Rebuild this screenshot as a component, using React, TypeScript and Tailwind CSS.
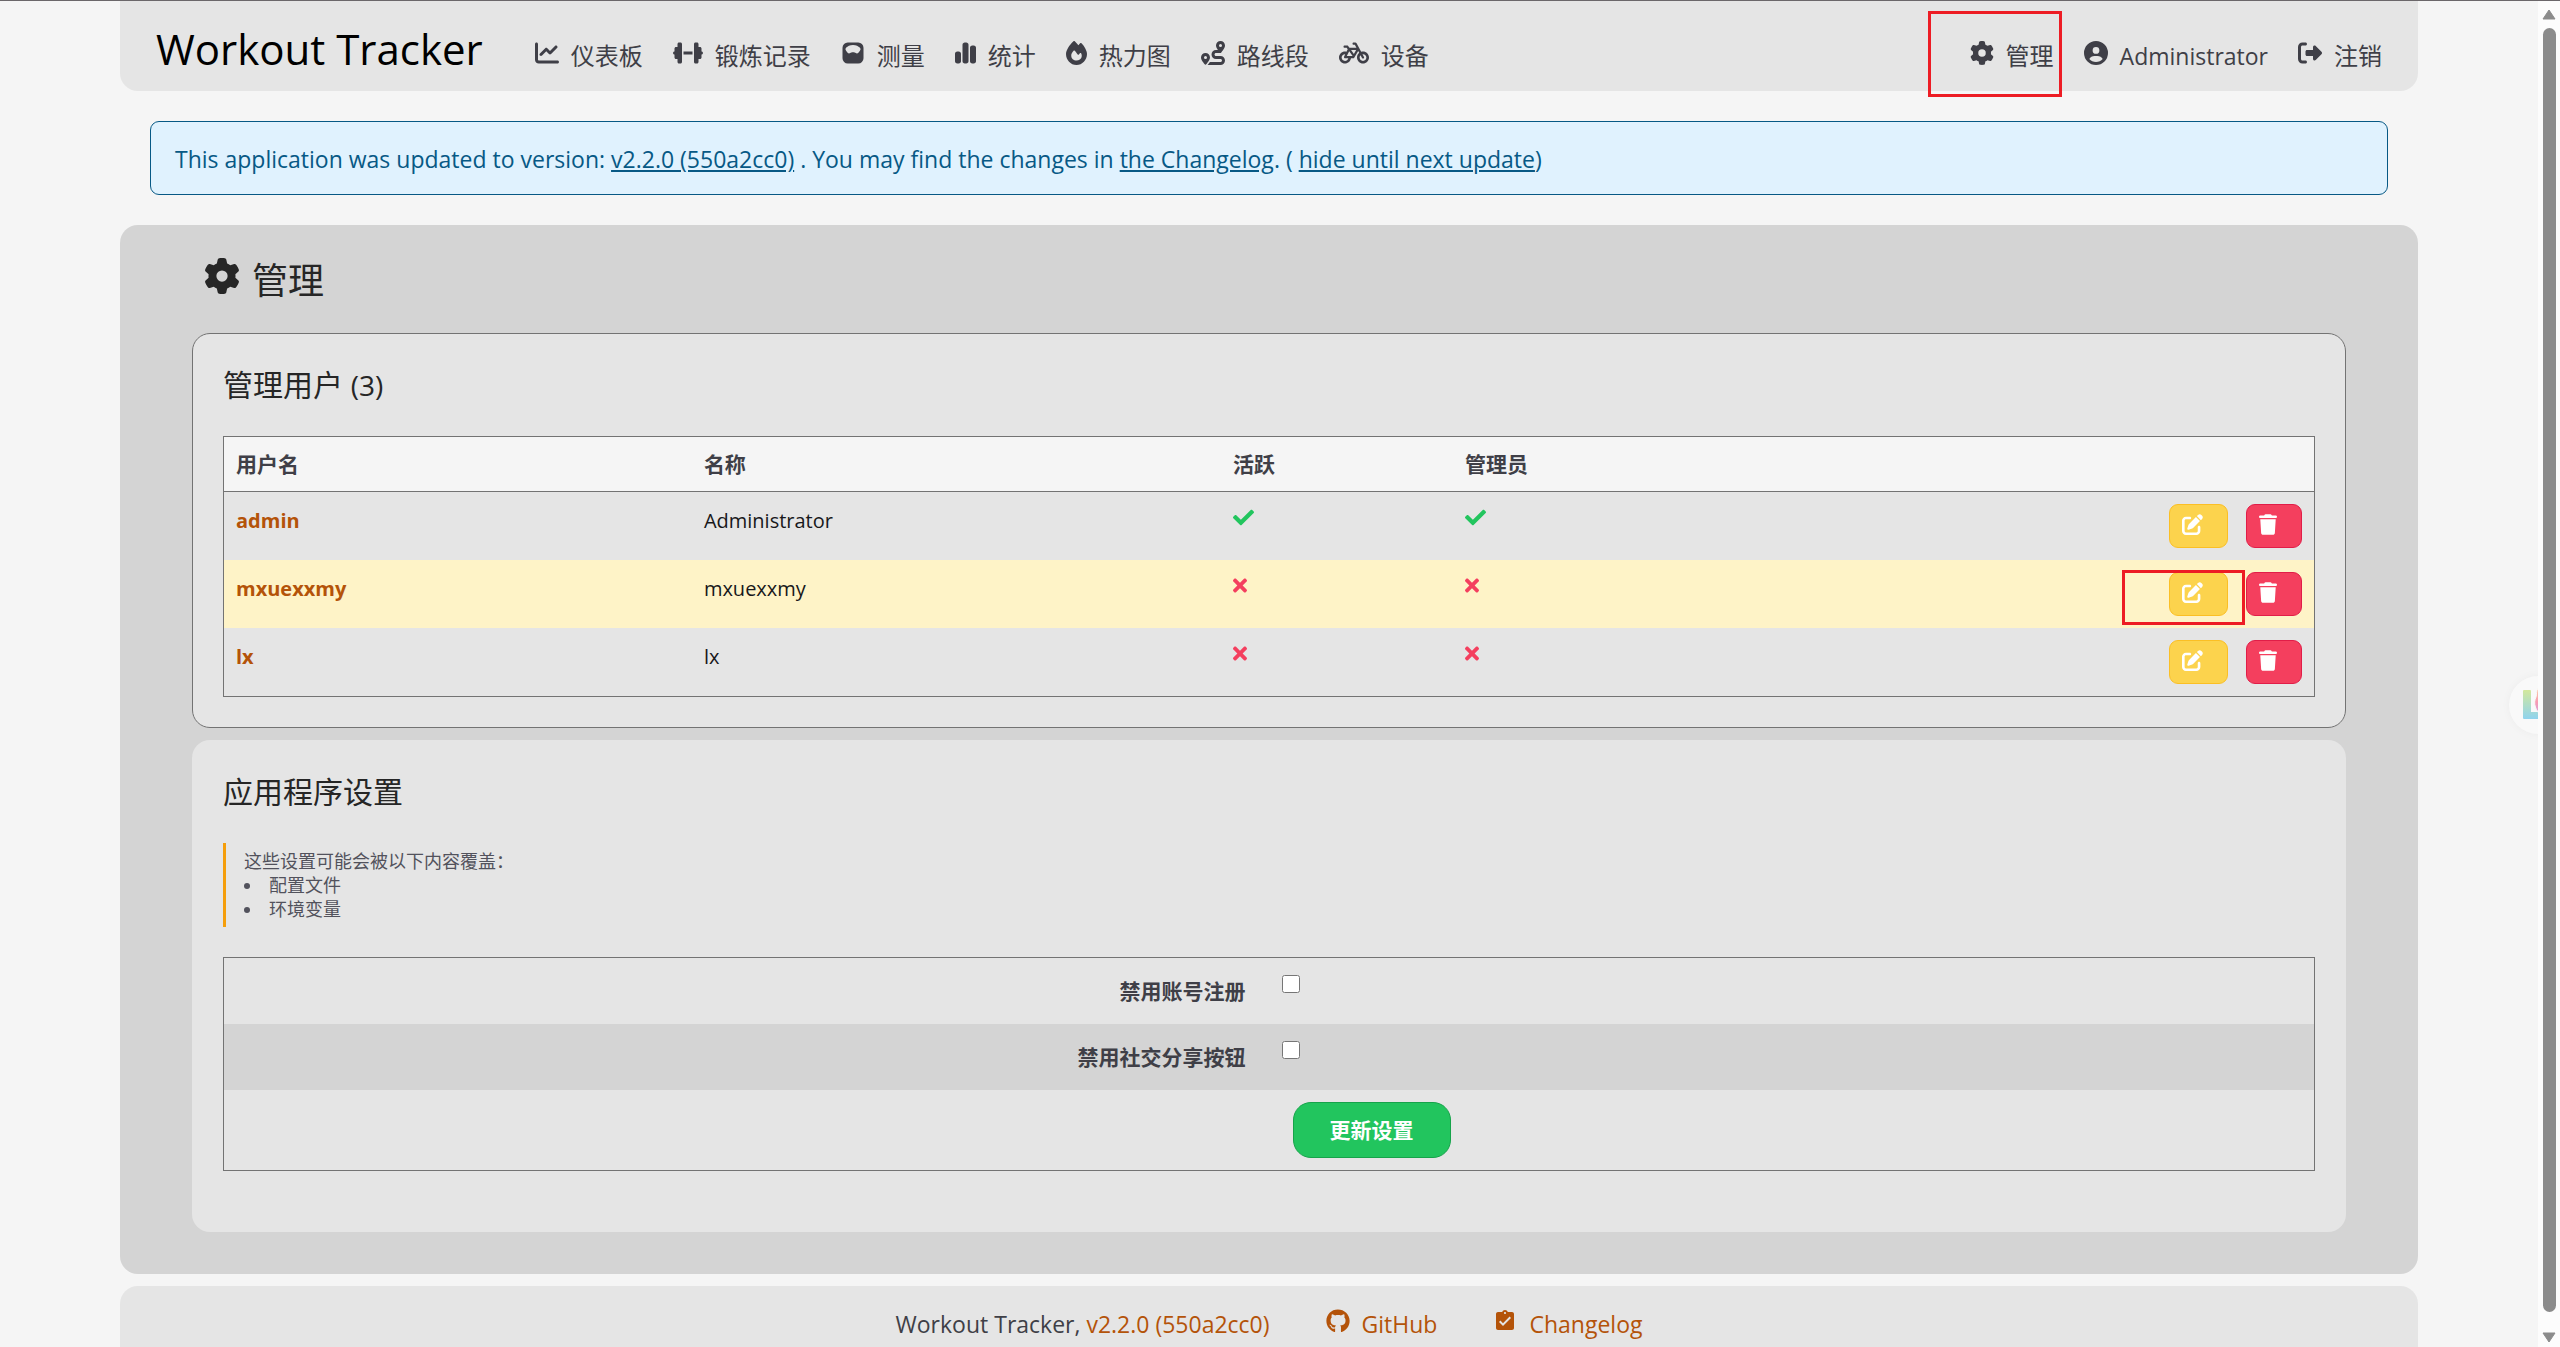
import type { ReactNode } from 'react';
import type { IconType } from 'react-icons';
import { FaCheck, FaTimes } from 'react-icons/fa';
import {
  FaBicycle,
  FaChartLine,
  FaChartSimple,
  FaCircleUser,
  FaDumbbell,
  FaFire,
  FaGear,
  FaGithub,
  FaPenToSquare,
  FaRightFromBracket,
  FaRoute,
  FaTrash,
} from 'react-icons/fa6';
import { IoScale } from 'react-icons/io5';
import { MdAssignmentTurnedIn } from 'react-icons/md';

const VERSION = 'v2.2.0 (550a2cc0)';

const navItems = [
  { icon: FaChartLine, label: '仪表板', size: 'w-6' },
  { icon: FaDumbbell, label: '锻炼记录', size: 'w-[30px]' },
  { icon: IoScale, label: '测量', size: 'w-6' },
  { icon: FaChartSimple, label: '统计', size: 'w-[21px]' },
  { icon: FaFire, label: '热力图', size: 'w-[21px]' },
  { icon: FaRoute, label: '路线段', size: 'w-6' },
  { icon: FaBicycle, label: '设备', size: 'w-[30px]' },
];

const users = [
  { username: 'admin', name: 'Administrator', active: true, admin: true },
  { username: 'mxuexxmy', name: 'mxuexxmy', active: false, admin: false, marked: true },
  { username: 'lx', name: 'lx', active: false, admin: false },
];

interface NavLinkProps {
  icon: IconType;
  size?: string;
  children: ReactNode;
}

function NavLink({ icon: Icon, size = 'w-6', children }: NavLinkProps) {
  return (
    <a href="#" className="relative flex items-baseline gap-3 text-2xl leading-9 whitespace-nowrap text-zinc-700">
      <Icon className={`h-6 ${size}`} />
      {children}
    </a>
  );
}

function Highlight({ className }: { className: string }) {
  return <div className={`pointer-events-none absolute border-3 border-[#ed1c24] ${className}`} />;
}

function Header() {
  return (
    <header className="rounded-b-[18px] bg-neutral-200 px-9">
      <nav className="flex h-[90px] items-baseline justify-between pt-[18px]">
        <div className="flex items-baseline gap-[30px]">
          <a href="#" className="mr-[22px] text-[42px] leading-[60px] whitespace-nowrap text-black">Workout Tracker</a>
          {navItems.map((item) => (
            <NavLink key={item.label} icon={item.icon} size={item.size}>{item.label}</NavLink>
          ))}
        </div>
        <div className="flex items-baseline gap-[30px]">
          <NavLink icon={FaGear}>
            管理
            <Highlight className="-top-[27px] -left-[42px] h-[86px] w-[134px]" />
          </NavLink>
          <NavLink icon={FaCircleUser}><span className="text-[23px]">Administrator</span></NavLink>
          <NavLink icon={FaRightFromBracket}>注销</NavLink>
        </div>
      </nav>
    </header>
  );
}

function UpdateNotice() {
  return (
    <div className="mx-[30px] my-[30px] rounded-[9px] border border-[#075985] bg-[#e0f2fe] px-6 pt-[19px] pb-[17px] text-[23px] leading-9 text-[#075985]">
      This application was updated to version: <a href="#" className="underline">{VERSION}</a> . You may find the
      changes in <a href="#" className="underline">the Changelog</a>. ({' '}
      <a href="#" className="underline">hide until next update</a>)
    </div>
  );
}

function Flag({ value }: { value: boolean }) {
  return value ? <FaCheck className="size-[21px] text-[#22c55e]" /> : <FaTimes className="h-[21px] w-[14px] text-[#f43f5e]" />;
}

function UserTable() {
  return (
    <table className="w-full table-fixed border-collapse border border-neutral-500 text-left text-[21px] leading-[30px]">
      <thead className="border-b border-neutral-500 bg-neutral-100 text-zinc-700">
        <tr className="h-[55px]">
          <th className="w-[22.4%] px-3">用户名</th>
          <th className="w-[25.3%] px-3">名称</th>
          <th className="w-[11.1%] px-3">活跃</th>
          <th className="px-3">管理员</th>
          <th className="px-3" aria-label="操作" />
        </tr>
      </thead>
      <tbody className="text-zinc-900">
        {users.map((user) => (
          <tr key={user.username} className={user.marked ? 'bg-[#fef3c7]' : ''}>
            <td className="px-3 pt-3.5 align-top text-xl leading-[30px] font-bold">
              <a href="#" className="text-[#b45309]">{user.username}</a>
            </td>
            <td className="px-3 pt-3.5 align-top text-xl leading-[30px]">{user.name}</td>
            <td className="px-3 pt-[15px] align-top"><Flag value={user.active} /></td>
            <td className="px-3 pt-[15px] align-top"><Flag value={user.admin} /></td>
            <td className="p-3">
              <div className="relative flex justify-end gap-[18px] text-white">
                <button aria-label="编辑" className="rounded-[9px] border border-[#fbbf24] bg-[#fcd34d] pt-[9px] pr-6 pb-3 pl-3">
                  <FaPenToSquare className="size-[21px]" />
                </button>
                <button aria-label="删除" className="rounded-[9px] border border-[#e11d48] bg-[#f43f5e] pt-[9px] pr-6 pb-3 pl-3">
                  <FaTrash className="h-[21px] w-[18px]" />
                </button>
                {user.marked && <Highlight className="-top-0.5 right-[57px] h-[55px] w-[123px]" />}
              </div>
            </td>
          </tr>
        ))}
      </tbody>
    </table>
  );
}

function SettingRow({ id, label }: { id: string; label: string }) {
  return (
    <tr className="h-[66px] even:bg-neutral-300">
      <th className="w-[49.5%] px-[13px] text-right text-zinc-700">
        <label htmlFor={id}>{label}</label>
      </th>
      <td className="px-[23px] pt-[17px] align-top">
        <input id={id} type="checkbox" className="block size-[18px]" />
      </td>
    </tr>
  );
}

function AppSettings() {
  return (
    <form>
      <blockquote className="mb-[30px] border-l-3 border-[#f59e0b] py-1.5 pl-[18px] text-lg leading-6 text-zinc-600">
        这些设置可能会被以下内容覆盖：
        <ul className="list-inside list-disc">
          <li>配置文件</li>
          <li>环境变量</li>
        </ul>
      </blockquote>
      <table className="w-full border-collapse border border-neutral-500 text-[21px] leading-[30px]">
        <tbody>
          <SettingRow id="registration" label="禁用账号注册" />
          <SettingRow id="social" label="禁用社交分享按钮" />
          <tr className="h-[81px]">
            <td />
            <td className="px-[34px]">
              <button type="button" className="block rounded-[18px] border border-[#16a34a] bg-[#22c55e] px-9 py-3 font-bold text-white">
                更新设置
              </button>
            </td>
          </tr>
        </tbody>
      </table>
    </form>
  );
}

function Footer() {
  return (
    <footer className="flex justify-center gap-14 rounded-t-[18px] bg-neutral-200 py-5 text-[23px] leading-9 text-[#b45309]">
      <div className="text-zinc-700">
        Workout Tracker, <a href="#" className="text-[#b45309]">{VERSION}</a>
      </div>
      <a href="#" className="flex items-baseline gap-3">
        <FaGithub className="size-6" />
        GitHub
      </a>
      <a href="#" className="flex items-baseline gap-3">
        <MdAssignmentTurnedIn className="size-6" />
        Changelog
      </a>
    </footer>
  );
}

// half of it hides behind the scrollbar
function FloatingBadge() {
  return (
    <div className="absolute top-[675px] -right-[29px] size-[58px] rounded-full bg-[#f9f9f9] shadow-[0_0_10px_rgba(0,0,0,0.04)]">
      <svg viewBox="0 0 58 58" className="size-full">
        <defs>
          <linearGradient id="badge-l" x1="0" y1="0" x2="0" y2="1">
            <stop offset="0" stopColor="#d3e89c" />
            <stop offset="1" stopColor="#8fd3ee" />
          </linearGradient>
          <linearGradient id="badge-o" x1="0" y1="0" x2="0" y2="1">
            <stop offset="0" stopColor="#fbc9a0" />
            <stop offset="0.5" stopColor="#f79bb4" />
            <stop offset="1" stopColor="#c9a2ea" />
          </linearGradient>
        </defs>
        <path d="M14 15q0-1 1-1h6q1 0 1 1v21h16v7H15q-1 0-1-1z" fill="url(#badge-l)" />
        <path d="M29 12c-2 3-1 6-2 9-3 6-1 14 7 20V12z" fill="url(#badge-o)" stroke="#f9f9f9" />
      </svg>
    </div>
  );
}

function Scrollbar() {
  return (
    <div className="flex w-[22px] shrink-0 flex-col items-center bg-[#fcfcfc] pt-2 pb-1 text-[#8b8b8b]">
      <svg viewBox="0 0 14 11" className="h-[11px] w-[14px]">
        <path d="M7 1 13 10H1z" fill="currentColor" stroke="currentColor" strokeLinejoin="round" />
      </svg>
      <div className="mt-2 mb-5 w-[13px] flex-1 rounded-full bg-[#8b8b8b]" />
      <svg viewBox="0 0 14 11" className="h-[11px] w-[14px]">
        <path d="M7 10 1 1h12z" fill="currentColor" stroke="currentColor" strokeLinejoin="round" />
      </svg>
    </div>
  );
}

export default function App() {
  return (
    <div className="flex h-screen overflow-hidden border-t border-[#6b676a] bg-neutral-100 font-['Open_Sans','Noto_Sans_CJK_SC',sans-serif]" lang="zh-CN">
      <div className="relative flex-1 overflow-hidden px-[120px]">
        <Header />
        <UpdateNotice />
        <main className="mb-3 rounded-[18px] bg-neutral-300 px-[72px] pb-[42px] text-neutral-800">
          <h1 className="flex items-baseline gap-3 px-3 pt-8 pb-7 text-4xl leading-[48px]">
            <FaGear className="size-9" />
            管理
          </h1>
          <section className="mb-3 rounded-[18px] border border-neutral-500 bg-neutral-200 p-[30px]">
            <h2 className="mb-[30px] text-3xl leading-[42px]">管理用户 <span className="text-[28px]">(3)</span></h2>
            <UserTable />
          </section>
          <section className="rounded-[18px] bg-neutral-200 px-[31px] pt-[31px] pb-[61px]">
            <h2 className="mb-[30px] text-3xl leading-[42px]">应用程序设置</h2>
            <AppSettings />
          </section>
        </main>
        <Footer />
        <FloatingBadge />
      </div>
      <Scrollbar />
    </div>
  );
}
